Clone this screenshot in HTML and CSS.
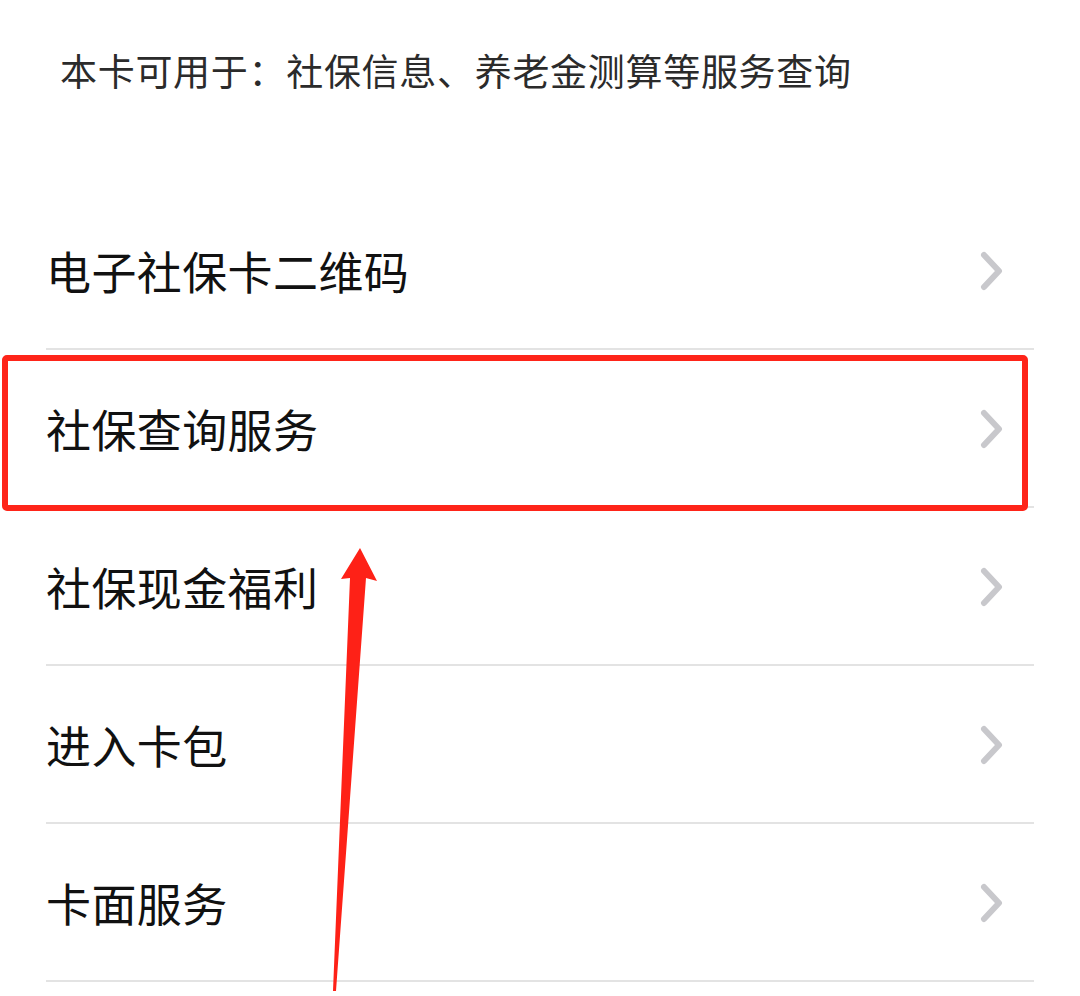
FILE: index.html
```html
<!DOCTYPE html>
<html>
<head>
    <title>电子社保卡</title>
    <link rel="stylesheet" href="styles.css">
</head>
<body>
    <p class="intro">本卡可用于：社保信息、养老金测算等服务查询</p>

    <ul class="menu">
        <li class="menu-item">
            <span>电子社保卡二维码</span>
            <svg class="chevron" viewBox="0 0 24 40"><polyline points="4,4 19,20 4,36"/></svg>
        </li>
        <li class="menu-item">
            <span>社保查询服务</span>
            <svg class="chevron" viewBox="0 0 24 40"><polyline points="4,4 19,20 4,36"/></svg>
        </li>
        <li class="menu-item">
            <span>社保现金福利</span>
            <svg class="chevron" viewBox="0 0 24 40"><polyline points="4,4 19,20 4,36"/></svg>
        </li>
        <li class="menu-item">
            <span>进入卡包</span>
            <svg class="chevron" viewBox="0 0 24 40"><polyline points="4,4 19,20 4,36"/></svg>
        </li>
        <li class="menu-item">
            <span>卡面服务</span>
            <svg class="chevron" viewBox="0 0 24 40"><polyline points="4,4 19,20 4,36"/></svg>
        </li>
    </ul>

    <!-- annotation drawn over the screenshot -->
    <div class="highlight-box"></div>
    <svg class="arrow" viewBox="0 0 1080 996">
        <polygon points="360,548 377,581 366,578 336,991 333,991 350,578 341,579"/>
    </svg>
</body>
</html>
```

FILE: styles.css
```css
* {
    margin: 0;
    padding: 0;
    box-sizing: border-box;
}

body {
    position: relative;
    width: 1080px;
    height: 996px;
    overflow: hidden;
    background: #ffffff;
    font-family: "Noto Sans CJK SC", "Noto Sans", sans-serif;
}

.intro {
    padding: 48px 0 0 60px;
    font-size: 37px;
    line-height: 44px;
    letter-spacing: 0.7px;
    color: #2b2b2b;
}

.menu {
    list-style: none;
    margin: 100px 46px 0 46px;
}

.menu-item {
    display: flex;
    justify-content: space-between;
    align-items: center;
    height: 158px;
    padding: 0 30px 0 0;
    border-bottom: 2px solid #e3e3e3;
    font-size: 45px;
    letter-spacing: 0.4px;
    color: #111111;
}

.chevron {
    width: 24px;
    height: 40px;
    margin-top: 2px;
}

.chevron polyline {
    fill: none;
    stroke: #c8c8cc;
    stroke-width: 6;
    stroke-linecap: round;
    stroke-linejoin: round;
}

.highlight-box {
    position: absolute;
    left: 2px;
    top: 355px;
    width: 1026px;
    height: 156px;
    border: 6px solid #fe2419;
    border-radius: 5px;
}

.arrow {
    position: absolute;
    left: 0;
    top: 0;
    width: 1080px;
    height: 996px;
}

.arrow polygon {
    fill: #fe2117;
}
```
